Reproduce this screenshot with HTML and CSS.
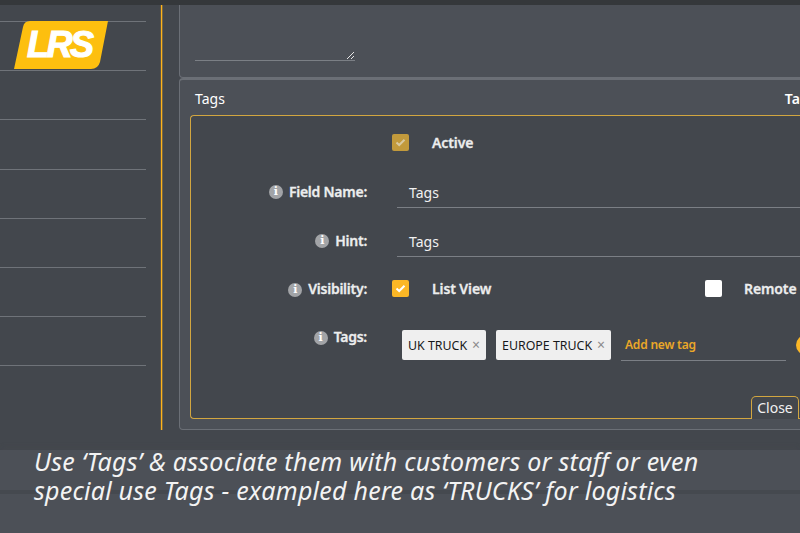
FILE: index.html
```html
<!DOCTYPE html>
<html lang="en">
<head>
<meta charset="utf-8">
<title>Tags</title>
<link rel="stylesheet" href="styles.css">
</head>
<body>
<div class="topbar"></div>
<div class="main">
  <aside class="sidebar">
    <div class="logo">
      <svg class="logo-bg" width="94" height="48" viewBox="0 0 94 48"><path d="M12 0H94L86 41Q84 48 77 48H0L9 6Q10 0 16 0Z" fill="#fdbf0f"/></svg>
      <span class="logo-text">LRS</span>
    </div>
    <div class="nav-row first"></div>
    <div class="nav-row"></div>
    <div class="nav-row"></div>
    <div class="nav-row"></div>
    <div class="nav-row"></div>
    <div class="nav-row"></div>
    <div class="nav-row"></div>
    <div class="nav-row"></div>
  </aside>
  <div class="rule"></div>
  <section class="content">
    <div class="panel upper">
      <div class="notes">
        <svg class="grip" width="9" height="9" viewBox="0 0 9 9"><path d="M1 8L8 1M5 8L8 5" stroke="#e6e6e6" stroke-width="1"/></svg>
      </div>
    </div>
    <div class="panel lower">
      <div class="panel-head"><span>Tags</span><span class="cut">Tags</span></div>
      <div class="box">
        <div class="row active-row">
          <span class="label"></span>
          <span class="check dim"><svg width="11" height="9" viewBox="0 0 11 9"><path d="M1.5 4.5L4.2 7L9.5 1.8" fill="none" stroke="#d9c9a0" stroke-width="2"/></svg></span>
          <span class="check-text">Active</span>
        </div>
        <div class="row field-row">
          <span class="label"><i class="info">i</i>Field Name:</span>
          <span class="input">Tags</span>
        </div>
        <div class="row field-row hint">
          <span class="label"><i class="info">i</i>Hint:</span>
          <span class="input">Tags</span>
        </div>
        <div class="row vis-row">
          <span class="label"><i class="info">i</i>Visibility:</span>
          <span class="check on"><svg width="11" height="9" viewBox="0 0 11 9"><path d="M1.5 4.5L4.2 7L9.5 1.8" fill="none" stroke="#fff" stroke-width="2"/></svg></span>
          <span class="check-text list">List View</span>
          <span class="check off"></span>
          <span class="check-text">Remote</span>
        </div>
        <div class="row tag-row">
          <span class="label"><i class="info">i</i>Tags:</span>
          <span class="chip chip-uk">UK TRUCK<b>×</b></span>
          <span class="chip chip-eu">EUROPE TRUCK<b>×</b></span>
          <span class="add">Add new tag</span>
          <span class="dot"></span>
        </div>
        <button class="close">Close</button>
      </div>
    </div>
  </section>
</div>
<footer class="caption">
  <p>Use ‘Tags’ &amp; associate them with customers or staff or even<br>special use Tags - exampled here as ‘TRUCKS’ for logistics</p>
</footer>
</body>
</html>
```
FILE: styles.css
```css
* { box-sizing: border-box; }
html, body { margin: 0; padding: 0; }
body {
  width: 800px;
  height: 533px;
  overflow: hidden;
  position: relative;
  background: #43474d;
  color: #fff;
  font-family: "Noto Sans", sans-serif;
}
.topbar { height: 5px; background: #35383b; }
.main { display: flex; height: 425px; width: 800px; overflow: hidden; }
.sidebar {
  position: relative;
  flex: 0 0 161px;
}
.rule {
  flex: 0 0 1px;
  background: #ffb31a;
  box-shadow: 1px 0 0 rgba(255, 179, 26, 0.3), -1px 0 0 rgba(255, 179, 26, 0.15);
}
.nav-row { width: 146px; height: 49.2px; border-bottom: 1px solid #6f7379; }
.nav-row.first { height: 17px; }
.logo { position: absolute; left: 14px; top: 16px; width: 94px; height: 48px; }
.logo-bg { display: block; }
.logo-text {
  position: absolute;
  left: 13px;
  top: 0;
  font: italic 700 36px/48px "Liberation Sans", sans-serif;
  letter-spacing: -2.5px;
  color: #fff;
  -webkit-text-stroke: 1.2px #fff;
}
.content { flex: 0 0 660px; margin-left: 17px; }
.panel { background: #4c5057; border: 1px solid #6b6f76; }
.upper {
  height: 73px;
  border-top: 0;
  border-radius: 0 0 0 4px;
  padding: 0 0 0 15px;
}
.notes {
  position: relative;
  width: 160px;
  height: 56px;
  border-bottom: 1px solid #7b7f85;
}
.grip { position: absolute; right: 0; bottom: 0; }
.lower {
  height: 352px;
  border-top-width: 2px;
  border-radius: 4px 0 0 4px;
  padding: 0 0 0 10px;
}
.panel-head {
  display: flex;
  gap: 560px;
  padding: 9px 0 0 5px;
  height: 35px;
  font-size: 14px;
  line-height: 19px;
}
.cut { font-weight: 600; }
.box {
  position: relative;
  width: 650px;
  height: 304px;
  background: #43474d;
  border: 1px solid #d2a640;
  border-right: 0;
  border-radius: 4px 0 0 4px;
}
.row { display: flex; align-items: center; }
.label {
  flex: 0 0 176px;
  display: flex;
  justify-content: flex-end;
  align-items: center;
  gap: 6px;
  font-size: 14px;
  font-weight: 600;
  line-height: 19px;
  color: #eceded;
  letter-spacing: -0.25px;
  -webkit-text-stroke: 0.3px #eceded;
}
.info {
  width: 14px;
  height: 14px;
  border-radius: 50%;
  background: #a2a4a7;
  color: #fff;
  font: 700 11px/14px "DejaVu Serif", serif;
  text-align: center;
  margin-top: 2px;
  letter-spacing: 0;
  -webkit-text-stroke: 0;
}
.check {
  flex: 0 0 17px;
  height: 17px;
  border-radius: 2px;
  display: flex;
  align-items: center;
  justify-content: center;
}
.check svg { display: block; }
.dim { background: #c29a3c; }
.on { background: #fbb726; }
.off { background: #fff; margin-left: 200px; }
.check-text {
  margin-left: 23px;
  font-size: 14px;
  font-weight: 600;
  line-height: 19px;
  color: #eceded;
  letter-spacing: -0.1px;
  -webkit-text-stroke: 0.3px #eceded;
}
.off + .check-text { margin-left: 22px; }
.list { flex: 0 0 auto; width: 73px; }
.active-row { margin-top: 17px; padding-left: 25px; }
.active-row .label { flex-basis: 176px; }
.field-row { margin-top: 19px; height: 37px; align-items: center; }
.field-row .label { margin-bottom: -3px; }
.field-row.hint { margin-top: 12px; }
.field-row .input {
  margin-left: 30px;
  flex: 0 0 420px;
  height: 37px;
  padding: 12px 0 0 12px;
  font-size: 14px;
  line-height: 19px;
  color: #f1f1f1;
  border-bottom: 1px solid #7b7f85;
}
.vis-row { margin-top: 23px; height: 17px; }
.vis-row .check.on { margin-left: 25px; }
.tag-row { margin-top: 33px; height: 31px; align-items: flex-start; }
.tag-row .label { margin-top: -3px; }
.chip {
  height: 30px;
  background: #efefef;
  border-radius: 2px;
  color: #16181a;
  font-size: 12.4px;
  line-height: 29px;
  padding: 0 0 0 6px;
  white-space: nowrap;
}
.chip-uk { flex: 0 0 84px; margin-left: 35px; }
.chip-eu { flex: 0 0 115px; margin-left: 10px; }
.chip b { font-weight: 400; font-size: 14px; color: #8a8a8a; margin-left: 5px; }
.add {
  margin-left: 10px;
  flex: 0 0 165px;
  height: 31px;
  padding: 0 0 0 4px;
  color: #eba828;
  font-size: 12px;
  font-weight: 600;
  line-height: 29px;
  letter-spacing: -0.2px;
  border-bottom: 1px solid #7b7f85;
}
.dot {
  flex: 0 0 20px;
  height: 20px;
  border-radius: 50%;
  background: #fbb726;
  margin: 5px 0 0 10px;
}
.close {
  position: absolute;
  left: 560px;
  bottom: -1px;
  width: 48px;
  height: 23px;
  padding: 0;
  background: #43474d;
  border: 1px solid #d2a640;
  border-bottom: 0;
  border-radius: 5px 5px 0 0;
  color: #f1f1f1;
  font: 14px/20px "Noto Sans", sans-serif;
}
.caption {
  margin-top: 20px;
  height: 83px;
  background: linear-gradient(#4c5057 0, #4c5057 40px, #45494f 40px, #45494f 44px, #4c5057 44px);
  box-shadow: 0 -4px 4px -2px #45484e;
}
.caption p {
  margin: 0;
  padding: 0 0 0 34px;
  font-size: 25px;
  font-weight: 400;
  letter-spacing: 0.24px;
  line-height: 29px;
  font-style: italic;
  color: #f3f3f3;
  transform: translateY(-3px);
}
```
